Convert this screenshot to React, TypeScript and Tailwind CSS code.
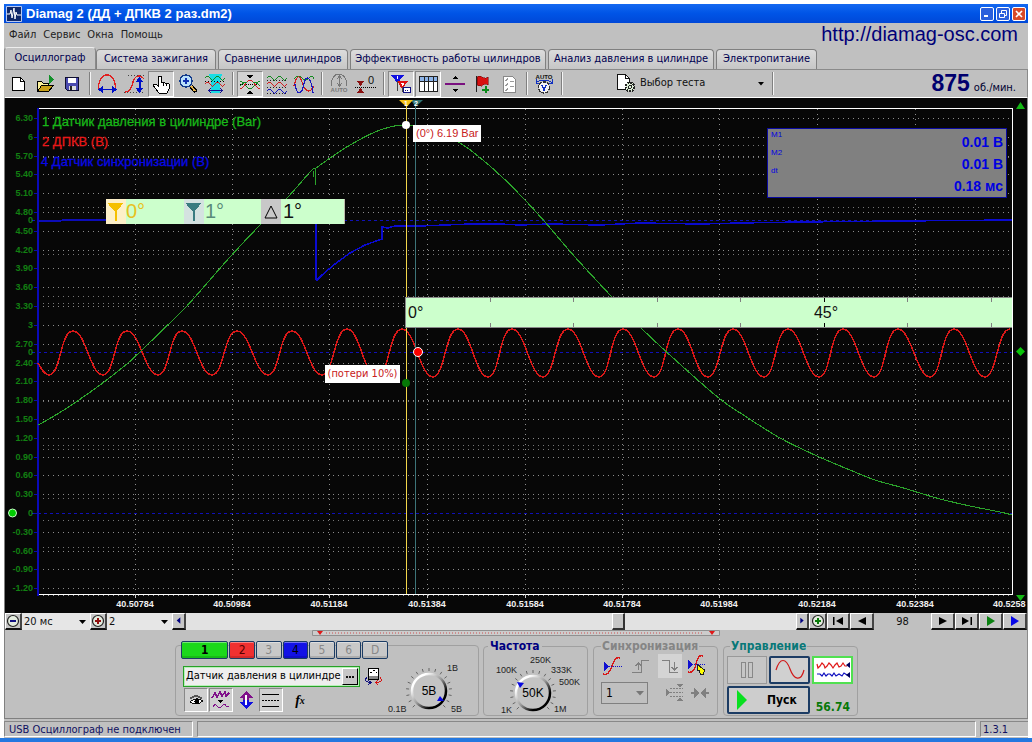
import React from "react";

type Pt = [number, number];

const smooth = (pts: Pt[]) => {
  let d = `M${pts[0][0]} ${pts[0][1]}`;
  for (let i = 0; i < pts.length - 1; i++) {
    const a = pts[Math.max(i - 1, 0)];
    const b = pts[i];
    const c = pts[i + 1];
    const e = pts[Math.min(i + 2, pts.length - 1)];
    d += ` C${b[0] + (c[0] - a[0]) / 6} ${b[1] + (c[1] - a[1]) / 6} ${c[0] - (e[0] - b[0]) / 6} ${c[1] - (e[1] - b[1]) / 6} ${c[0]} ${c[1]}`;
  }
  return d;
};

const pressureA: Pt[] = [[38, 425], [49, 419], [70, 406], [100, 385], [128, 363], [145, 347], [180, 313], [195, 297], [230, 257], [260, 225], [288, 197], [310, 172], [315, 168]];
const pressureB: Pt[] = [[316, 168], [333, 156], [350, 145], [375, 132], [390, 127], [405, 125], [432, 129], [460, 143], [478, 156], [500, 175], [525, 200], [545, 222], [575, 257], [611, 296], [640, 327], [682, 366], [720, 399], [745, 416], [780, 438], [817, 456], [850, 470], [875, 480], [900, 487], [920, 493], [940, 499], [970, 506], [1000, 512], [1012, 515]];

const peaks = [73, 127, 182, 237, 292, 347, 402, 458, 512, 568, 623, 678, 733, 788, 843, 898, 954, 1010];
const troughs = [49, 103, 158, 212, 268, 322, 377, 433, 488, 543, 599, 654, 708, 764, 819, 874, 930, 985];

const crankPath = () => {
  let d = "M38 363 C42 370 45 375 49 375";
  peaks.forEach((p, i) => {
    const top = i < 5 ? 331 : 329;
    const bottom = i < 6 ? 375 : 377;
    const t = troughs[i];
    d += ` C${t + 12} ${bottom} ${p - 13} ${top} ${p} ${top}`;
    const n = troughs[i + 1];
    if (n) d += ` C${p + 13} ${top} ${n - 13} ${i + 1 < 6 ? 375 : 377} ${n} ${i + 1 < 6 ? 375 : 377}`;
  });
  return d;
};

const levels: [string, number][] = [
  ["6.30", 118], ["6", 137], ["5.70", 156], ["5.40", 174], ["5.10", 193], ["4.80", 212], ["4.50", 231], ["4.20", 250],
  ["3.90", 268], ["3.60", 287], ["3.30", 306], ["3", 325], ["2.70", 344], ["2.40", 363], ["2.10", 381], ["1.80", 400],
  ["1.50", 419], ["1.20", 438], ["0.90", 457], ["0.60", 475], ["0.30", 494], ["0", 513], ["-0.30", 532], ["-0.60", 551],
  ["-0.90", 569], ["-1.20", 588],
];
const extraRows = [145, 157, 207, 254, 296, 303, 370, 401, 445, 449, 498, 520, 547];
const times: [string, number][] = [
  ["40.50784", 135], ["40.50984", 232], ["40.51184", 329], ["40.51384", 427], ["40.51584", 525], ["40.51784", 622],
  ["40.51984", 719], ["40.52184", 817], ["40.52384", 915],
];

function Chart() {
  return (
    <svg viewBox="5 98 1022 515" className="block h-auto w-full bg-[#070707]" fontFamily="'Liberation Sans', Arial, sans-serif" role="img" aria-label="Осциллограмма">
      <g shapeRendering="crispEdges" fill="none">
        {levels.map(([l, y]) => l !== "0" && <path key={l} d={`M38 ${y}.5H1012`} stroke="#8c8c8c" strokeDasharray="1 4" />)}
        {extraRows.map((y) => <path key={y} d={`M38 ${y}.5H1012`} stroke="#777" strokeDasharray="1 4" />)}
        {times.map(([l, x]) => <path key={l} d={`M${x}.5 109V594`} stroke="#8c8c8c" strokeDasharray="1 4" />)}
        {[220, 352, 513].map((y) => <path key={y} d={`M32 ${y}.5H1012`} stroke="#1010b8" strokeDasharray="3 3" />)}
        {levels.map(([l, y]) => <path key={l} d={`M34 ${y}.5H37`} stroke="#0c0ca8" />)}
        <path d="M38 108.5H1012.5V594" stroke="#fff" />
        <path d="M38 594.5H1013" stroke="#fff" />
        <path d="M38 595.5H1013" stroke="#999" strokeDasharray="1 4" />
        {times.map(([l, x]) => <path key={l} d={`M${x}.5 594V598`} stroke="#ccc" />)}
        <path d="M37.5 108V596" stroke="#0a0ab8" strokeWidth="2" />
      </g>
      <g fill="#128012" fontSize="9" textAnchor="end" fontWeight="bold">
        {levels.map(([l, y]) => <text key={l} x="33" y={y + 3}>{l}</text>)}
        <text x="33" y="223">0</text>
        <text x="33" y="355">0</text>
      </g>
      <g fill="#f0f0f0" fontSize="9" textAnchor="middle" fontWeight="bold">
        {times.map(([l, x]) => <text key={l} x={x} y="607">{l}</text>)}
        <text x="993" y="607" textAnchor="start">40.5258</text>
      </g>
      <g fontSize="13" stroke="none">
        <text x="42" y="126" fill="#18b818" stroke="#18b818" strokeWidth="0.3">1 Датчик давления в цилиндре (Bar)</text>
        <text x="42" y="146" fill="#e81818" stroke="#e81818" strokeWidth="0.3">2 ДПКВ (В)</text>
        <text x="41" y="166" fill="#0808e8" stroke="#0808e8" strokeWidth="0.3">4 Датчик синхронизации (В)</text>
      </g>
      <g fill="none" shapeRendering="crispEdges">
        <path d="M38 221H60L63 220H105L180 221H315" stroke="#0c0cb8" strokeWidth="1.5" />
        <path d="M315.500 224V280" stroke="#0a0ad0" strokeWidth="2" />
        <path d="M316 281L322 275L335 264L350 253L365 245L382 239V227L388 228L395 226H420L470 224H500L520 225L550 224L600 225L640 223L700 224L740 223L800 222L900 221L1012 220" stroke="#0a0ad0" strokeWidth="1.5" />
        <path d={crankPath()} stroke="#d81818" strokeWidth="1.5" />
        <path d={smooth(pressureA)} stroke="#2ba32b" strokeWidth="1.1" />
        <path d="M315.500 168V185M313.500 171V177" stroke="#2ba32b" />
        <path d={smooth(pressureB)} stroke="#2ba32b" strokeWidth="1.1" />
        <path d="M406.500 105V594" stroke="#f2d64a" />
        <path d="M415.500 105V594" stroke="#3c7478" />
      </g>
      <path d="M411 100H423L415.500 107z" fill="#2f7474" />
      <path d="M399 100H413L406.500 107z" fill="#f5c21a" />
      <text x="406" y="106" fontSize="7" fontWeight="bold" fill="#fff" textAnchor="middle">1</text>
      <text x="416" y="106" fontSize="7" fontWeight="bold" fill="#fff" textAnchor="middle">2</text>
      <circle cx="406" cy="125" r="4" fill="#fff" />
      <circle cx="406" cy="383" r="4" fill="#067806" />
      <circle cx="418" cy="352" r="4.500" fill="#f00" stroke="#fff" />
      <circle cx="12.500" cy="513" r="4" fill="#0c0" stroke="#c8ffc8" />
      <path d="M1020.500 102L1025 109H1016z" fill="#14b814" />
      <path d="M1016 595H1025L1020.500 601z" fill="#14b814" />
      <path d="M1020.500 347L1025 351.500L1020.500 356L1016 351.500z" fill="#0ac40a" />
    </svg>
  );
}

function Marker({ color }: { color: string }) {
  return (
    <svg width="18" height="24" viewBox="0 0 18 24" shapeRendering="crispEdges" aria-hidden="true">
      <path d="M2 4H17L10 12V21H9V12z" fill={color} stroke={color} />
    </svg>
  );
}

const Ic = ({ children, s = 24 }: { children: React.ReactNode; s?: number }) => (
  <svg width={s} height={s} viewBox={`0 0 ${s} ${s}`} fill="none" shapeRendering="crispEdges" aria-hidden="true" className="shrink-0">{children}</svg>
);

const wave = (y: number, a: number) => `M2 ${y}q2.500 ${-a} 5 0t5 0t5 0t5 0`;

function Tool({ label, on, children }: { label: string; on?: boolean; children: React.ReactNode }) {
  return (
    <button aria-label={label} title={label} className={"flex h-[26px] w-[26px] shrink-0 items-center justify-center " + (on ? "border border-t-[#888] border-l-[#888] border-r-white border-b-white bg-[#d2d2d2]" : "")}>
      <Ic>{children}</Ic>
    </button>
  );
}

const Sep = () => <div className="mr-[3px] ml-1 h-[23px] w-[2px] shrink-0 border-l border-[#808080] bg-[#f4f4f4]" />;

function Toolbar() {
  return (
    <div className="flex h-7 items-center border-t border-r border-[#8a8a8a] border-b-white bg-[#c0c0c0] pl-px">
      <div className="flex gap-px">
        <Tool label="Новый"><path d="M6.500 5.500H14.500L18.500 9.500V18.500H6.500z" fill="#fff" stroke="#000" /><path d="M14.500 5.500V9.500H18.500" stroke="#000" /></Tool>
        <Tool label="Открыть"><path d="M4.500 19.500V9.500H8.500L10.500 11.500H15.500V13.500" fill="#fbf19c" stroke="#000" /><path d="M4.500 19.500L8.500 13.500H20.500L15.500 19.500z" fill="#c8a018" stroke="#000" /><path d="M16 3V12L21.500 7.500z" fill="#12902a" /></Tool>
        <Tool label="Сохранить"><path d="M5.500 5.500H18.500V18.500H7.500L5.500 16.500z" fill="#4a4ab0" stroke="#101030" /><path d="M8 6H16V11H8z" fill="#fff" /><path d="M9 14H16V18H9z" fill="#ddd" /><path d="M10 14H12V18H10z" fill="#222" /></Tool>
      </div>
      <Sep />
      <div className="flex gap-px">
        <Tool label="Развёртка"><path d="M3.500 17V14C5 -1 19 -1 20.500 14V17" stroke="#e02020" strokeWidth="1.300" /><path d="M4 17.500H21" stroke="#0010c8" strokeWidth="1.500" /><path d="M3 17.500L8 14V21zM22 17.500L17 14V21z" fill="#0010c8" /></Tool>
        <Tool label="Усиление"><path d="M6 3.500H22M2 20.500H22" stroke="#444" strokeDasharray="1 2" /><path d="M3 20C13 20 8 4 17 4C20 4 21 6 22 7" stroke="#e02020" strokeWidth="1.300" /><path d="M17.500 7V19" stroke="#0010c8" strokeWidth="2" /><path d="M13.500 10L17.500 5L21.500 10zM13.500 16L17.500 21L21.500 16z" fill="#0010c8" /></Tool>
        <Tool label="Рука" on><path d="M9.500 14.500V4.500H12V10L20 12V17L18 21H10L4.500 14V12.500L7 12z" fill="#fff" stroke="#000" /><path d="M14.500 10.500V14M17.500 11.500V14" stroke="#000" /></Tool>
        <Tool label="Лупа"><path d="M15 14L20 20" stroke="#000" strokeWidth="4" /><path d="M15 14L19 19" stroke="#e3b04b" strokeWidth="2" /><circle cx="10" cy="9" r="6" fill="#b9e0fb" stroke="#123a8a" strokeWidth="1.500" /><path d="M7 9H13M10 6V12" stroke="#1030b0" strokeWidth="2" /></Tool>
        <Tool label="Масштаб"><path d="M6 2H19L17 10V21H8V10z" fill="#18dce4" /><path d={wave(6, 4)} stroke="#138a20" /><path d={wave(12, 4)} stroke="#d02020" /><path d="M7 18.500H18M8 16L6 18.500L8 21M17 16L19 18.500L17 21" stroke="#101090" /><path d="M2 9.500H22" stroke="#000" strokeDasharray="1 2" /></Tool>
      </div>
      <Sep />
      <div className="flex gap-px">
        <Tool label="Совместить" on><path d="M2 12.500H22" stroke="#000" strokeDasharray="1 1" /><path d="M2 9C6 9 8 17 12 17S18 9 22 9" stroke="#138a20" /><path d="M2 17C6 17 8 8 12 8S18 17 22 17" stroke="#d02020" /><path d="M2 14L6 10H9M15 10H18L22 14" stroke="#138a20" /><path d="M9 3H15L12 6.500zM9 22H15L12 18.500z" fill="#000" /></Tool>
        <Tool label="Разнести"><path d={wave(6, 4)} stroke="#138a20" /><path d={wave(12, 4)} stroke="#d02020" /><path d={wave(19, 4)} stroke="#1818c0" /><path d="M2 8.500H22M2 15.500H22M2 21.500H22" stroke="#222" strokeDasharray="1 2" /></Tool>
        <Tool label="Наложить"><path d="M2 7Q6 2 10 6T17 6T22 7" stroke="#138a20" /><path d="M2 14Q6 -2 10 10T19 18L22 14" stroke="#d02020" strokeWidth="1.200" /><path d="M3 12C5 25 10 22 12 12S19 4 21 21" stroke="#1818c0" strokeWidth="1.200" /></Tool>
      </div>
      <Sep />
      <div className="flex gap-px">
        <Tool label="Авто масштаб"><path d="M4 14C4 -2 20 -2 20 14" stroke="#777" /><path d="M12.500 5V13M10 7L12.500 4L15 7M10 11L12.500 14L15 11" stroke="#777" /><text x="12" y="20" fontSize="6" fontFamily="Liberation Sans" fill="#777" textAnchor="middle" fontWeight="bold">AUTO</text></Tool>
        <Tool label="Ноль"><path d="M1 15.500H22" stroke="#000" strokeDasharray="1 1" /><path d="M3 9H10L6.500 14zM3 21H10L6.500 16z" fill="#8a1010" /><text x="14" y="12" fontSize="11" fontFamily="Liberation Sans" fill="#111">0</text></Tool>
      </div>
      <Sep />
      <div className="flex gap-px">
        <Tool label="Маркеры" on><path d="M2 3H15L8.500 11z" fill="#1010e0" /><path d="M8 9H19L13 17z" fill="#e01010" /><path d="M8.500 9V19M13.500 15V20" stroke="#444" /><path d="M14.500 15.500H21.500V20.500H14.500z" fill="#fff" stroke="#101080" /><path d="M16 18.500H20" stroke="#101080" strokeDasharray="1 1" /><path d="M8.500 4V7M12 11H14V12H13V14" stroke="#fff" /></Tool>
        <Tool label="Таблица" on><path d="M3.500 4.500H21.500V19.500H3.500z" fill="#fff" stroke="#222" /><path d="M4 5H21V9H4z" fill="#8db4e8" /><path d="M3 9.500H22M8.500 5V19M12.500 5V19M17.500 5V19" stroke="#222" /></Tool>
        <Tool label="Разделитель"><path d="M9 7H15L12 4zM9 17H15L12 20z" fill="#000" /><path d="M2 12H22" stroke="#7a1080" strokeWidth="2" /></Tool>
        <Tool label="Флаг"><path d="M6.500 4V20" stroke="#222" strokeWidth="1.500" /><path d="M7 5Q10 3 12 5T18 5V13Q15 11 13 13T7 13z" fill="#d81010" stroke="#600" strokeWidth=".5" /><path d="M12 17.500H19M15.500 14V21" stroke="#0a8a1a" strokeWidth="2" /></Tool>
        <Tool label="Список"><path d="M6.500 4.500H15.500L18.500 7.500V20.500H6.500z" fill="#fff" stroke="#888" /><path d="M8 8L9 9L11 6M8 13L9 14L11 11M8 18L9 19L11 16M13 9H17M13 14H17" stroke="#999" /></Tool>
      </div>
      <Sep />
      <Tool label="Авто"><text x="12" y="7" fontSize="6" fontFamily="Liberation Sans" fill="#111" textAnchor="middle" fontWeight="bold">AUTO</text><path d="M4 11C7 7 17 7 20 11M4 7V11H8M20 7V11H16" stroke="#1030c0" /><circle cx="12" cy="15.500" r="5.500" fill="#f4f4f4" stroke="#333" strokeWidth="1.400" strokeDasharray="3 1" /><path d="M10 13L12 18L14 13" stroke="#1030c0" strokeWidth="1.500" /></Tool>
      <Sep />
      <button className="ml-[46px] flex w-[156px] items-center gap-1 text-[11px] text-[#111]">
        <Ic><path d="M5.500 2.500H13.500L17.500 6.500V17.500H5.500z" fill="#fff" stroke="#111" /><path d="M13.500 3V6.500H17" stroke="#111" /><circle cx="18" cy="15" r="4.500" fill="#dff0d8" stroke="#222" strokeWidth="2" strokeDasharray="2 1" /><circle cx="18" cy="15" r="1.500" stroke="#222" /></Ic>
        <span className="whitespace-nowrap">Выбор теста</span>
        <svg width="6" height="4" viewBox="0 0 6 4" className="mr-1 ml-auto" aria-hidden="true"><path d="M0 0H6L3 3.500z" fill="#000" /></svg>
      </button>
      <Sep />
      <div className="mr-[11px] ml-auto flex items-baseline gap-1 text-[#00006e]">
        <b className="font-['Liberation_Sans',sans-serif] text-[23px] leading-6">875</b>
        <span className="text-[11px] text-[#000030]">об./мин.</span>
      </div>
    </div>
  );
}

const tabs = [
  ["Система зажигания", "w-[120px]"],
  ["Сравнение цилиндров", "w-[130px]"],
  ["Эффективность работы цилиндров", "w-[196px]"],
  ["Анализ давления в цилиндре", "w-[166px]"],
  ["Электропитание", "w-[101px]"],
];

function BarButton({ label, w, children }: { label: string; w: string; children: React.ReactNode }) {
  return (
    <button aria-label={label} className={"flex h-[17px] shrink-0 items-center justify-center border-t border-r-2 border-b-2 border-l border-t-white border-r-[#444] border-b-[#111] border-l-white bg-[#c6c6c6] " + w}>
      {children}
    </button>
  );
}

const Arrow = ({ d, c = "#000" }: { d: string; c?: string }) => (
  <svg width="12" height="10" viewBox="0 0 12 10" aria-hidden="true"><path d={d} fill={c} /></svg>
);

const Round = ({ minus, c }: { minus?: boolean; c: string }) => (
  <svg width="14" height="14" viewBox="0 0 14 14" aria-hidden="true" className="shrink-0">
    <circle cx="7" cy="7" r="5.500" fill="#e4ecdf" stroke="#222" strokeWidth="1.200" />
    <path d={minus ? "M4 7H10" : "M4 7H10M7 4V10"} stroke={c} strokeWidth="2" />
  </svg>
);

function BarSelect({ label, value, w }: { label: string; value: string; w: string }) {
  return (
    <div className={"relative flex h-[17px] shrink-0 overflow-hidden " + w}>
      <select aria-label={label} className="block h-[17px] w-full appearance-none bg-[#e6e6e6] py-0 pl-[2px] text-[11px] leading-[17px] text-[#111]"><option>{value}</option></select>
      <svg width="7" height="4" viewBox="0 0 7 4" className="pointer-events-none absolute top-[7px] right-1" aria-hidden="true"><path d="M0 0H7L3.500 4z" fill="#000" /></svg>
    </div>
  );
}

function ControlBar() {
  return (
    <div className="flex h-[17px] items-start bg-[#c0c0c0]">
      <BarButton label="Уменьшить" w="w-[17px]"><Round minus c="#101080" /></BarButton>
      <BarSelect label="Развёртка" value="20 мс" w="w-[68px]" />
      <BarButton label="Увеличить" w="w-[17px]"><Round c="#901010" /></BarButton>
      <BarSelect label="Множитель" value="2" w="w-[65px]" />
      <BarButton label="Прокрутить влево" w="w-[14px]"><Arrow d="M8 1V8L4 4.500z" c="#000080" /></BarButton>
      <div className="flex h-[17px] flex-1 justify-center bg-[#e2e2e2]">
        <div className="ml-[254px] h-[17px] w-[13px] border-t border-r-2 border-b-2 border-l border-t-white border-r-[#333] border-b-[#333] border-l-white bg-[#c6c6c6]" />
      </div>
      <BarButton label="Прокрутить вправо" w="w-[13px]"><Arrow d="M4 1V8L8 4.500z" c="#000080" /></BarButton>
      <BarButton label="Добавить" w="w-[18px]"><Round c="#0a7a0a" /></BarButton>
      <BarButton label="В начало" w="w-[23px]"><Arrow d="M11 1V9L4 5zM1 1H2.500V9H1z" /></BarButton>
      <BarButton label="Назад" w="w-6"><Arrow d="M10 1V9L2 5z" /></BarButton>
      <span className="w-[57px] text-center text-[11px] leading-[17px] text-[#111]">98</span>
      <BarButton label="Вперёд" w="w-6"><Arrow d="M2 1V9L10 5z" /></BarButton>
      <BarButton label="В конец" w="w-6"><Arrow d="M1 1V9L8 5zM9.500 1H11V9H9.500z" /></BarButton>
      <BarButton label="Воспроизвести" w="w-6"><Arrow d="M2 0V10L10 5z" c="#0a8010" /></BarButton>
      <BarButton label="Воспроизвести быстро" w="w-6"><Arrow d="M2 0V10L10 5z" c="#0808e8" /></BarButton>
    </div>
  );
}

const channels = [
  ["1", "w-12 bg-[#1bd81b] text-black font-bold"],
  ["2", "w-[26px] bg-[#f03030] text-[#500]"],
  ["3", "w-[26px] bg-[#c8c8c8] text-[#888]"],
  ["4", "w-[26px] bg-[#1212e6] text-black"],
  ["5", "w-[26px] bg-[#c8c8c8] text-[#888]"],
  ["6", "w-[26px] bg-[#c8c8c8] text-[#888]"],
  ["D", "w-[26px] bg-[#c8c8c8] text-[#888]"],
];

function Knob({ value, ticks, pointer, cx, cy }: { value: string; ticks: [number, number, string][]; pointer: string; cx: number; cy: number }) {
  const marks = Array.from({ length: 17 }, (_, i) => -225 + i * 16.875);
  const id = `knob${cx}`;
  return (
    <svg width="90" height="68" viewBox="0 0 90 68" className="shrink-0" fontFamily="'Liberation Sans', Arial, sans-serif" fontSize="9" role="img" aria-label={value}>
      <defs><linearGradient id={id} x1="0" y1="0" x2="1" y2="1"><stop offset=".2" stopColor="#fff" /><stop offset=".5" stopColor="#999" /><stop offset=".75" stopColor="#000" /></linearGradient></defs>
      {marks.map((a) => {
        const r = (a * Math.PI) / 180;
        return <path key={a} d={`M${cx + 20 * Math.cos(r)} ${cy + 20 * Math.sin(r)}L${cx + 23 * Math.cos(r)} ${cy + 23 * Math.sin(r)}`} stroke="#666" />;
      })}
      <circle cx={cx} cy={cy} r="17" fill="#c4c4c4" stroke={`url(#${id})`} strokeWidth="2.500" />
      <path d={pointer} fill="#0808e0" />
      <text x={cx} y={cy + 4} fontSize="12" textAnchor="middle" fill="#000">{value}</text>
      {ticks.map(([x, y, t]) => <text key={t} x={x} y={y} fill="#222">{t}</text>)}
    </svg>
  );
}

const fbtn = "flex h-6 w-6 shrink-0 items-center justify-center";
const pressed = " border border-t-[#888] border-l-[#888] border-r-white border-b-white bg-[#d0d0d0]";

function Panel() {
  return (
    <div className="flex h-[81px] items-start bg-[#c0c0c0] pl-[170px]">
      <section className="mt-2 flex h-[71px] w-[304px] shrink-0 rounded border border-[#a0a0a0]" aria-label="Каналы">
        <div className="-mt-[5px] w-[212px] shrink-0 pl-[5px]">
          <div className="flex gap-px">
            {channels.map(([n, c]) => (
              <button key={n} className={"h-[18px] rounded-[2px] border border-[#1c3c64] text-[12px] leading-4 shadow-[inset_0_1px_0_#ffffff66,inset_0_-2px_0_#00000022] " + c}>{n}</button>
            ))}
          </div>
          <div className="mt-[7px] flex items-center gap-1">
            <div className="ml-[2px] flex h-[21px] w-[177px] items-center border border-[#28a028] bg-[#eee] shadow-[inset_0_0_0_1px_#b8f0b8]">
              <input aria-label="Название канала" defaultValue="Датчик давления в цилиндре" className="min-w-0 flex-1 bg-transparent pl-[2px] text-[11px] text-black outline-none" />
              <button aria-label="Выбрать датчик" className="mr-px flex h-[17px] w-4 shrink-0 items-center justify-center border border-t-white border-r-black border-b-black border-l-white bg-[#c6c6c6]"><svg width="8" height="2" viewBox="0 0 8 2"><path d="M0 0H2V2H0zM3 0H5V2H3zM6 0H8V2H6z" fill="#111" /></svg></button>
            </div>
            <button aria-label="Поменять каналы">
              <Ic s={20}><path d="M4.500 1.500H14.500V12.500H4.500z" fill="#fff" stroke="#000" /><path d="M5 9H14V12H5z" fill="#888" /><path d="M6 5.500H8M9 3.500H11M12 5.500H13" stroke="#000" /><path d="M3 10Q-1 15 7 15.500M4 13L7 15.500L4 18" stroke="#101080" /><path d="M16 10Q20 15 12 15.500M14 13L12 15.500L14 18" stroke="#d81010" /></Ic>
            </button>
          </div>
          <div className="mt-px ml-[3px] flex gap-px">
            <button aria-label="Показать" className={fbtn + pressed}><Ic s={20}><path d="M4 9Q10 3 16 9" stroke="#555" strokeWidth="2" /><path d="M4 12Q10 6 17 11Q11 16 4 12z" fill="#fff" stroke="#111" /><circle cx="11" cy="11.500" r="2.500" fill="#000" /></Ic></button>
            <button aria-label="Фильтр" className={fbtn + pressed}><Ic s={20}><path d="M1 8L4 3L6 7L9 2L11 6L14 2L15 6L18 3" stroke="#80108a" strokeWidth="1.500" /><path d="M7 10H12L9.500 13z" fill="#000" /><path d="M2 17Q4 13 6 16T11 16T15 16L18 17" stroke="#80108a" /></Ic></button>
            <button aria-label="Инверсия" className={fbtn}><Ic s={20}><path d="M10 1L17 8H13V10H7V8H3z" fill="#80108a" /><path d="M10 19L17 12H13V10H7V12H3z" fill="#1010e0" /><path d="M10 5V15" stroke="#fff" strokeWidth="2" /></Ic></button>
            <button aria-label="Линии" className={fbtn + pressed}><Ic s={20}><path d="M1 4.500H18M1 16.500H18" stroke="#000" /><path d="M1 10.500H18" stroke="#000" strokeDasharray="2 1" /></Ic></button>
            <button aria-label="Функция" className={fbtn + " ml-1 font-['Liberation_Serif',serif] text-[14px] font-bold text-black italic"}>f<span className="text-[10px]">x</span></button>
          </div>
        </div>
        <Knob value="5В" cx={41} cy={45} pointer="M49 55L52 50L56 55z" ticks={[[59, 25, "1В"], [0, 66, "0.1В"], [63, 66, "5В"]]} />
      </section>

      <fieldset className="mt-[2px] ml-1 h-[77px] w-[105px] min-w-0 shrink-0 rounded border border-[#a0a0a0] pl-[10px]">
        <legend className="-ml-[6px] px-[2px] text-[12px] leading-[14px] font-bold text-[#000080]">Частота</legend>
        <div className="-mt-[3px]">
          <Knob value="50K" cx={39} cy={43} pointer="M23 32L30 33L26 38z" ticks={[[36, 13, "250K"], [2, 23, "100K"], [57, 23, "333K"], [65, 35, "500K"], [60, 62, "1M"], [7, 63, "1K"]]} />
        </div>
      </fieldset>

      <fieldset className="mt-[2px] ml-[5px] h-[77px] w-[125px] min-w-0 shrink-0 rounded border border-[#a0a0a0] px-[7px]">
        <legend className="px-[1px] text-[12px] leading-[14px] font-bold text-[#858585]">Синхронизация</legend>
        <div className="flex justify-between pt-px">
          <button aria-label="Уровень"><Ic><path d="M2 20Q8 22 11 12T19 4" stroke="#d81818" strokeWidth="1.400" /><path d="M4 12.500H21" stroke="#1010d0" strokeDasharray="1 1" /><path d="M3 8V17L8 12.500z" fill="#1010d0" /></Ic></button>
          <button aria-label="Фронт"><Ic><path d="M3 18.500H12.500V6.500H20M9.500 16V9M7 12L9.500 9L12 12" stroke="#808080" strokeWidth="1.500" /></Ic></button>
          <button aria-label="Спад" className="bg-[#d4d4d4]"><Ic><path d="M4 6.500H11.500V18.500H20M16.500 8V15M14 13L16.500 16L19 13" stroke="#808080" strokeWidth="1.500" /></Ic></button>
          <button aria-label="Указать уровень"><Ic><path d="M2 18Q8 20 10 10T17 2" stroke="#d81818" strokeWidth="1.400" /><path d="M4 10.500H20" stroke="#1010d0" strokeDasharray="1 1" /><path d="M2 6V15L7 10.500z" fill="#1010d0" /><path d="M11.500 10.500L18.500 16L17.500 20.500H14.500L13 16H11.500z" fill="#ff0" stroke="#222" /></Ic></button>
        </div>
        <div className="mt-1 flex items-center justify-between">
          <div className="relative flex">
            <select aria-label="Канал синхронизации" className="h-[22px] w-[47px] appearance-none border border-[#808080] bg-[#c0c0c0] pl-1 text-[12px] text-black"><option>1</option></select>
            <svg width="8" height="5" viewBox="0 0 8 5" className="pointer-events-none absolute top-[9px] right-1" aria-hidden="true"><path d="M0 0H8L4 4.500z" fill="#777" /></svg>
          </div>
          <button aria-label="По центру" className="ml-3"><Ic s={20}><path d="M5 5.500H18M5 9.500H18M5 13.500H18" stroke="#808080" strokeDasharray="2 1" /><path d="M1 6V13L5 9.500zM11 1H19L15 4zM11 18H19L15 15z" fill="#808080" /></Ic></button>
          <button aria-label="Сжать"><Ic s={20}><path d="M1 10H6M19 10H14" stroke="#808080" strokeWidth="2" /><path d="M4 5V15L10 10zM16 5V15L10 10z" fill="#808080" /></Ic></button>
        </div>
      </fieldset>

      <fieldset className="mt-[2px] ml-[5px] h-[77px] w-[135px] min-w-0 shrink-0 rounded border border-[#a0a0a0] px-[3px]">
        <legend className="ml-[3px] px-[1px] text-[12px] leading-[14px] font-bold text-[#087878]">Управление</legend>
        <div className="mt-[3px] flex gap-[2px]">
          <button aria-label="Пауза" className="flex h-7 w-10 items-center justify-center border border-[#999] bg-[#c6c6c6]"><Ic s={20}><path d="M4.500 2.500H8.500V17.500H4.500zM11.500 2.500H15.500V17.500H11.500z" stroke="#888" /></Ic></button>
          <button aria-label="Синус" className="flex h-7 w-[41px] items-center justify-center rounded-[2px] border-2 border-[#1c3c64] bg-[#d0d0d0]"><svg width="30" height="22" viewBox="0 0 30 22" aria-hidden="true"><path d="M1 11C5 -2 11 -1 15 10S26 23 29 11" stroke="#d01818" strokeWidth="1.200" fill="none" /></svg></button>
          <button aria-label="Поток" className="flex h-7 w-[41px] items-center justify-center border-2 border-[#50e050] bg-white"><svg width="34" height="22" viewBox="0 0 34 22" fill="none" aria-hidden="true"><path d="M1 5L2 9L4 7L6 4L8 6L9 9L11 7L13 4L15 6L17 9L19 6L21 4L23 8L25 7L27 4L29 7H31" stroke="#e01818" strokeWidth="1.200" /><path d="M1 15H4L6 17L8 14L10 17L12 15H14L16 17L18 14L20 17L23 15L26 17L28 14L31 16" stroke="#1010c0" strokeWidth="1.200" /><path d="M34 3V9L30 6zM34 13V19L30 16z" fill="#000060" /></svg></button>
        </div>
        <div className="mt-[2px] flex items-end">
          <button className="flex h-7 w-[83px] items-center rounded-[2px] border-2 border-[#1c3c64] bg-[#cdcdcd] pl-2 text-[12px] font-bold text-black">
            <svg width="10" height="20" viewBox="0 0 10 20" aria-hidden="true"><path d="M0 0L10 10L0 20z" fill="#08e020" /></svg>
            <span className="ml-5">Пуск</span>
          </button>
          <span className="flex-1 pr-1 text-right text-[12px] leading-[14px] font-bold text-[#087808]">56.74</span>
        </div>
      </fieldset>
    </div>
  );
}

const winBtn = "flex h-[14px] w-[14px] items-center justify-center rounded-[2px] border border-white";

export default function App() {
  return (
    <div className="bg-white px-1 pt-1 font-['DejaVu_Sans_Condensed','DejaVu_Sans',sans-serif]">
      <header className="flex h-[19px] items-center bg-gradient-to-b from-[#1468f0] via-[#0054e6] to-[#0048d8] pr-[2px] pl-[2px]">
        <svg width="16" height="16" viewBox="0 0 16 16" aria-hidden="true"><path d="M.5 .5H15.500V15.500H.5z" fill="#102868" stroke="#b8c8f0" /><path d="M1 8H4L5 4L6 12L8 2L9 13L10 6L11 9H15" stroke="#fff" fill="none" /></svg>
        <h1 className="ml-1 flex-1 font-['Liberation_Sans',sans-serif] text-[13px] font-bold whitespace-nowrap text-white">Diamag 2 (ДД + ДПКВ 2 раз.dm2)</h1>
        <div className="flex gap-[2px]">
          <button aria-label="Свернуть" className={winBtn + " bg-[#2c60dc]"}><svg width="8" height="8" viewBox="0 0 8 8"><path d="M1 5H5V7H1z" fill="#fff" /></svg></button>
          <button aria-label="Восстановить" className={winBtn + " bg-[#2c60dc]"}><svg width="8" height="8" viewBox="0 0 8 8" fill="none" stroke="#fff"><path d="M.5 3.500H5.500V7.500H.5zM2.500 3V.5H7.500V5.500H6" /></svg></button>
          <button aria-label="Закрыть" className={winBtn + " bg-[#d84a28]"}><svg width="8" height="8" viewBox="0 0 8 8"><path d="M1 1L7 7M7 1L1 7" stroke="#fff" strokeWidth="1.600" /></svg></button>
        </div>
      </header>

      <div className="flex h-6 items-center bg-[#c0c0c0] pl-[5px] text-[11px] text-[#222]">
        <nav className="flex gap-[7px]">
          {["Файл", "Сервис", "Окна", "Помощь"].map((m) => <button key={m}>{m}</button>)}
        </nav>
        <a href="http://diamag-osc.com" className="mr-[10px] mb-[3px] ml-auto font-['Liberation_Sans',sans-serif] text-[20px] leading-5 text-[#000078]">http://diamag-osc.com</a>
      </div>

      <div role="tablist" className="flex h-[22px] items-end gap-[2px] bg-[#c0c0c0] text-[11px] whitespace-nowrap text-[#000050]">
        <button role="tab" aria-selected="true" className="-mr-[2px] h-[22px] w-[92px] rounded-t border border-b-0 border-[#8a8a8a] border-t-[#eee] bg-[#c4c4c4]">Осциллограф</button>
        {tabs.map(([t, w]) => (
          <button key={t} role="tab" className={"h-5 rounded-t border border-b-0 border-[#808080] bg-gradient-to-b from-[#dcdcdc] to-[#c6c6c6] " + w}>{t}</button>
        ))}
      </div>

      <Toolbar />

      <main className="border-x border-t border-t-white border-r-[#8a8a8a] border-l-[#808080]">
        <div className="relative">
          <Chart />
          <div className="absolute top-[101px] left-[101px] flex h-[25px] w-[239px] border-r border-[#bba] bg-[#ccffcc] font-['Liberation_Sans',sans-serif] text-[20px] leading-[25px]">
            <div className="flex w-[78px] text-[#e8c020]"><span className="w-5 bg-[#fdf0c8]"><Marker color="#f5c000" /></span>0°</div>
            <div className="flex w-[77px] text-[#5a8a7a]"><span className="mr-px w-5 bg-[#d4e2e0]"><Marker color="#3a7c80" /></span>1°</div>
            <div className="flex text-[#111]"><span className="mr-[2px] flex w-5 items-center justify-center bg-[#c8c8c8]"><svg width="14" height="14" viewBox="0 0 14 14" aria-hidden="true"><path d="M7 1L13 13H1z" stroke="#000" fill="none" /></svg></span>1°</div>
          </div>
          <div className="absolute top-[27px] left-[408px] h-[17px] bg-white px-[3px] font-['Liberation_Sans',sans-serif] text-[11px] leading-[17px] text-[#c82020]">(0°) 6.19 Bar</div>
          <div className="absolute top-[267px] left-[320px] h-[18px] w-[75px] bg-white text-center text-[11px] leading-[18px] whitespace-nowrap text-[#c82020]">(потери 10%)</div>
          <div className="absolute top-[199px] right-[15px] left-[400px] h-[31px] border border-r-0 border-[#888] bg-[#ccffcc] font-['Liberation_Sans',sans-serif] text-[16px] leading-[29px] text-[#111]">
            <span className="pl-[2px]">0°</span>
            <svg viewBox="0 0 606 29" className="absolute inset-0 h-full w-full" aria-hidden="true">
              {[84, 167, 251, 334, 418, 501, 585].map((x) => <path key={x} d={`M${x}.5 0V4M${x}.5 25V29`} stroke={x === 418 ? "#000" : "#808080"} />)}
              <text x="420" y="20" textAnchor="middle" fill="#111">45°</text>
            </svg>
          </div>
          <dl className="absolute top-[30px] right-5 h-[70px] w-60 border border-[#0a0aa0] bg-[#808080] px-[3px] font-['Liberation_Sans',sans-serif] text-[#0000e0]">
            {[["M1", "0.01 В"], ["M2", "0.01 В"], ["dt", "0.18 мс"]].map(([k, v], i) => (
              <div key={k} className="flex h-[22px] justify-between">
                <dt className={"text-[8px] leading-3 " + ["", "-mt-1", "-mt-2"][i]}>{k}</dt>
                <dd className="pt-1 text-[14px] leading-[18px] font-bold">{v}</dd>
              </div>
            ))}
          </dl>
        </div>
        <ControlBar />
        <div className="flex h-[7px] justify-center bg-[#c0c0c0]">
          <svg width="408" height="6" viewBox="0 0 408 6" aria-hidden="true"><path d="M.5 .5H407.500V5.500H.5z" fill="#ccc" stroke="#909090" /><path d="M14 3H392" stroke="#d05050" strokeDasharray="1 2" /><path d="M5 1H11L8 5zM397 1H403L400 5z" fill="#e01818" /></svg>
        </div>
        <Panel />
      </main>

      <footer className="flex h-5 items-stretch gap-1 border-t border-[#808080] bg-[#c0c0c0] pt-[2px] pb-px text-[11px] leading-[15px] whitespace-nowrap text-[#101060]">
        <div className="w-[189px] border border-[#888] border-r-white border-b-white pl-1">USB Осциллограф не подключен</div>
        <div className="flex-1 border border-[#888] border-r-white border-b-white" />
        <div className="w-12 border border-r-0 border-[#888] border-b-white pl-[2px]">1.3.1</div>
      </footer>
      <div className="-mx-1 h-1 bg-[#2478e0]" />
    </div>
  );
}
